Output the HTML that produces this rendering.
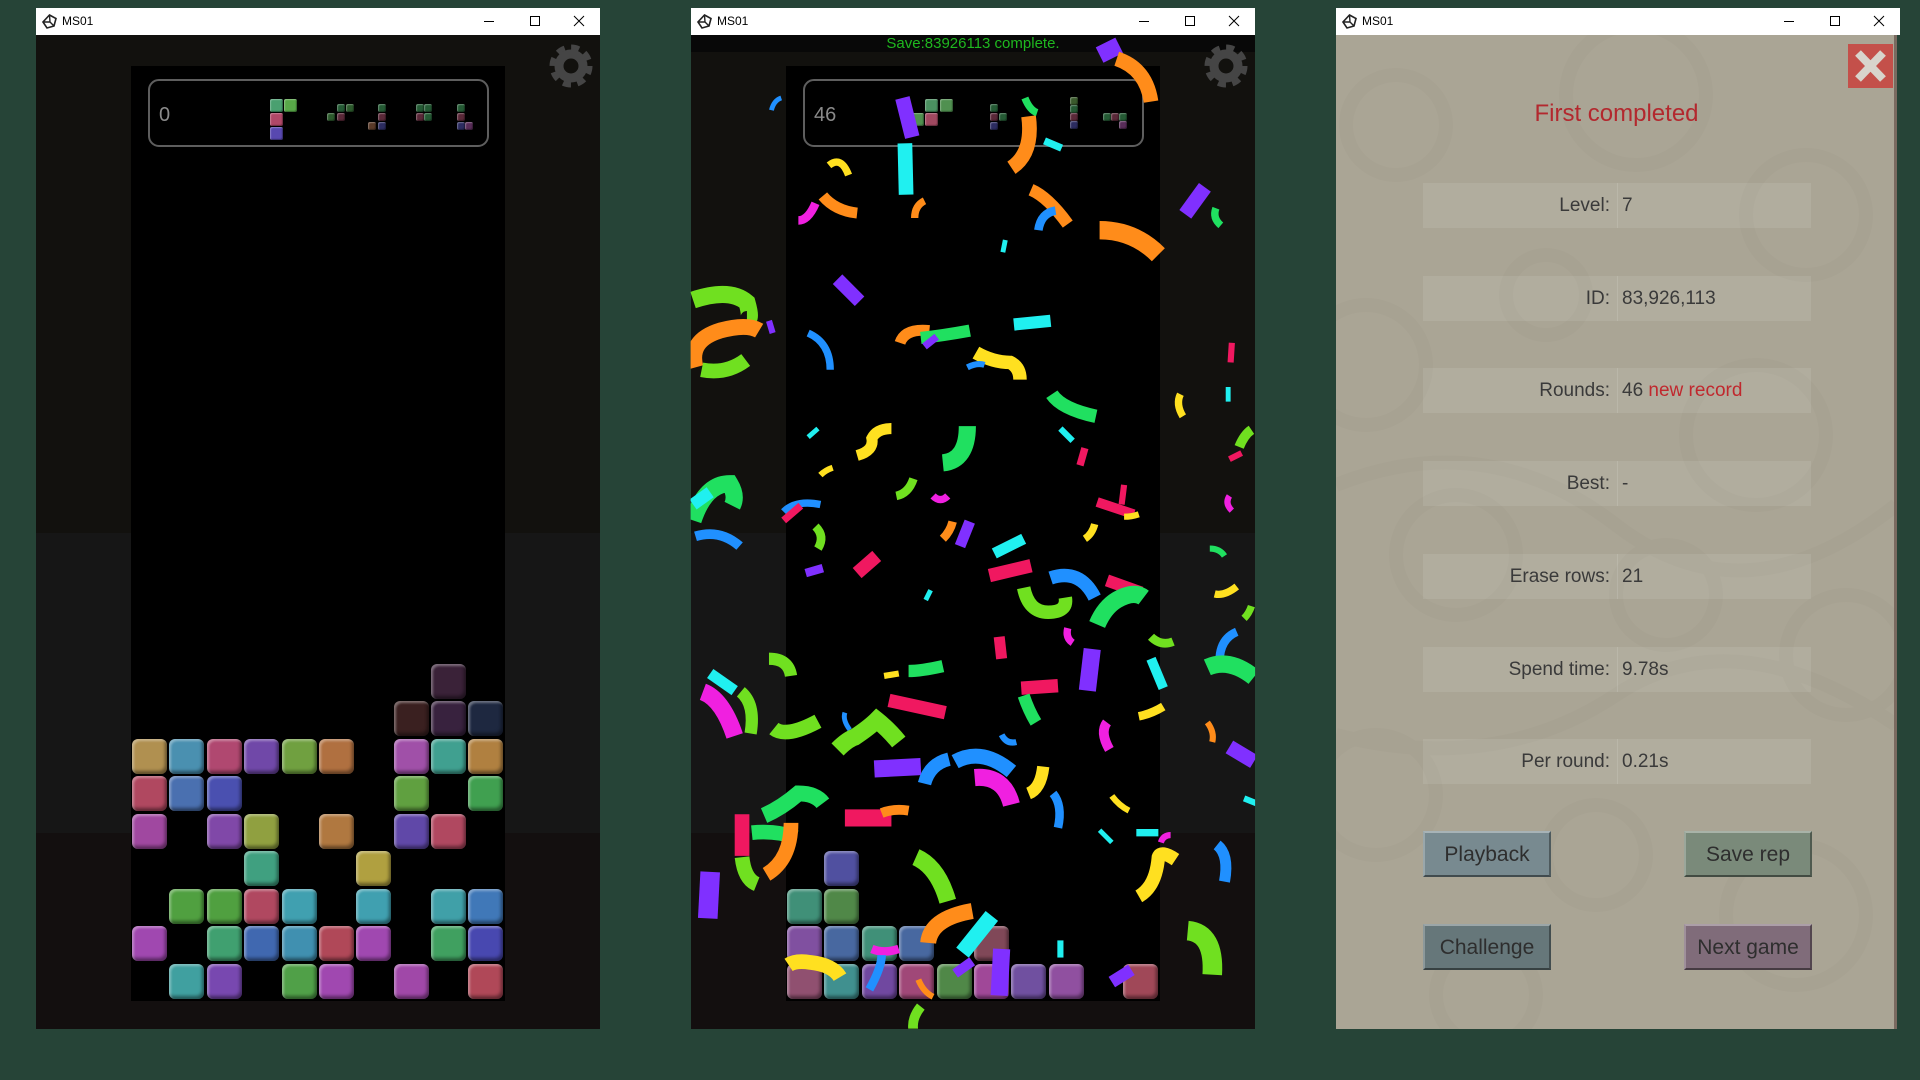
<!DOCTYPE html>
<html><head><meta charset="utf-8"><style>
*{margin:0;padding:0;box-sizing:border-box}
body{width:1920px;height:1080px;background:#264437;position:relative;overflow:hidden;font-family:"Liberation Sans",sans-serif}
.win{position:absolute;top:8px;width:564px;height:1021px;overflow:hidden}
.tb{position:absolute;left:0;top:0;width:564px;height:27px;background:#fff;font-size:12px;color:#000}
.tb .t{position:absolute;left:26px;top:6px}
.tb svg{position:absolute}
.c{position:absolute;left:0;top:27px;width:564px;height:994px}
.bd{position:absolute;background:#000}
.b{position:absolute;width:35px;height:35px;border-radius:6px;box-shadow:inset 2px 2px 2px rgba(255,255,255,.35),inset -2px -3px 3px rgba(0,0,0,.45)}
.p{position:absolute;border-radius:2px;box-shadow:inset 1px 1px 1px rgba(255,255,255,.3),inset -1px -1px 1px rgba(0,0,0,.4)}
.sb{position:absolute;border:2px solid #5e5e5e;border-radius:11px}
.sc{position:absolute;color:#8a8a8a;font-size:20px}
.row{position:absolute;left:87px;width:388px;height:45px;background:rgba(255,255,255,.09)}
.row .l{position:absolute;right:201px;top:12px;font-size:19px;color:#3a3a3a;white-space:nowrap}
.row .v{position:absolute;left:199px;top:12px;font-size:19px;color:#3a3a3a;white-space:nowrap}
.row .dv{position:absolute;left:194px;top:0;width:1px;height:45px;background:rgba(255,255,255,.12)}
.btn{position:absolute;width:128px;height:46px;font-size:21px;color:#2e2e2e;text-align:center;line-height:44px;border:2px solid;border-color:rgba(255,255,255,.35) rgba(0,0,0,.35) rgba(0,0,0,.45) rgba(255,255,255,.25)}
</style></head><body>

<!-- WINDOW 1 -->
<div class="win" style="left:36px">
 <div class="tb">
  <svg style="left:6px;top:6px" width="15" height="15" viewBox="0 0 15 15"><path d="M7.5 1 L14 4.5 L12 12 L5 14 L1 8 Z" fill="none" stroke="#222" stroke-width="1.6"/><path d="M7.5 1 L8 8 L1 8 M8 8 L12 12" stroke="#222" stroke-width="1.4" fill="none"/></svg>
  <span class="t">MS01</span>
  <svg style="left:447px;top:7px" width="12" height="12"><path d="M1 6.5H11" stroke="#000"/></svg>
  <svg style="left:493px;top:7px" width="12" height="12"><rect x="1.5" y="1.5" width="9" height="9" fill="none" stroke="#000"/></svg>
  <svg style="left:537px;top:7px" width="12" height="12"><path d="M1 1L11 11M11 1L1 11" stroke="#000"/></svg>
 </div>
 <div class="c" style="background:linear-gradient(#12110e 0,#12110e 498px,#161616 498px,#161616 798px,#130f0f 798px)">
  <div class="bd" style="left:95px;top:31px;width:374px;height:935px"></div>
  <svg style="position:absolute;left:512px;top:8px" width="46" height="46" viewBox="-23 -23 46 46"><circle r="17" fill="none" stroke="#454545" stroke-width="9" stroke-dasharray="7.4 5.95"/><circle r="12" fill="none" stroke="#454545" stroke-width="9"/></svg>
  <div class="sb" style="left:112px;top:44px;width:341px;height:68px"></div>
  <div class="sc" style="left:123px;top:69px">0</div>
 </div>
</div>
<div class="p" style="left:270px;top:99px;width:13px;height:13px;background:#4aa070"></div>
<div class="p" style="left:284px;top:99px;width:13px;height:13px;background:#58a848"></div>
<div class="p" style="left:270px;top:113px;width:13px;height:13px;background:#b04868"></div>
<div class="p" style="left:270px;top:127px;width:13px;height:13px;background:#5848b0"></div>
<div class="p" style="left:337px;top:104px;width:8px;height:8px;background:#245a34"></div>
<div class="p" style="left:346px;top:104px;width:8px;height:8px;background:#2c5a2c"></div>
<div class="p" style="left:327px;top:113px;width:8px;height:8px;background:#2c5a2c"></div>
<div class="p" style="left:337px;top:113px;width:8px;height:8px;background:#5a2838"></div>
<div class="p" style="left:378px;top:104px;width:8px;height:8px;background:#245a34"></div>
<div class="p" style="left:378px;top:113px;width:8px;height:8px;background:#5a2838"></div>
<div class="p" style="left:368px;top:122px;width:8px;height:8px;background:#5a3a28"></div>
<div class="p" style="left:378px;top:122px;width:8px;height:8px;background:#2c2c60"></div>
<div class="p" style="left:416px;top:104px;width:8px;height:8px;background:#245a34"></div>
<div class="p" style="left:424px;top:104px;width:8px;height:8px;background:#245a34"></div>
<div class="p" style="left:416px;top:113px;width:8px;height:8px;background:#5a2838"></div>
<div class="p" style="left:424px;top:113px;width:8px;height:8px;background:#245a34"></div>
<div class="p" style="left:457px;top:104px;width:8px;height:8px;background:#245a34"></div>
<div class="p" style="left:457px;top:113px;width:8px;height:8px;background:#5a2838"></div>
<div class="p" style="left:457px;top:122px;width:8px;height:8px;background:#2c2c60"></div>
<div class="p" style="left:465px;top:122px;width:8px;height:8px;background:#582c58"></div>

<div class="b" style="left:431px;top:664px;background:#3a2238"></div>
<div class="b" style="left:394px;top:701px;background:#3a2020"></div>
<div class="b" style="left:431px;top:701px;background:#38223e"></div>
<div class="b" style="left:468px;top:701px;background:#1e2840"></div>
<div class="b" style="left:132px;top:739px;background:#b09050"></div>
<div class="b" style="left:169px;top:739px;background:#4a90b0"></div>
<div class="b" style="left:207px;top:739px;background:#b04870"></div>
<div class="b" style="left:244px;top:739px;background:#7048a8"></div>
<div class="b" style="left:282px;top:739px;background:#70a040"></div>
<div class="b" style="left:319px;top:739px;background:#b07040"></div>
<div class="b" style="left:394px;top:739px;background:#a050a8"></div>
<div class="b" style="left:431px;top:739px;background:#40a090"></div>
<div class="b" style="left:468px;top:739px;background:#b08040"></div>
<div class="b" style="left:132px;top:776px;background:#b04860"></div>
<div class="b" style="left:169px;top:776px;background:#4a70b0"></div>
<div class="b" style="left:207px;top:776px;background:#4a50b0"></div>
<div class="b" style="left:394px;top:776px;background:#60a040"></div>
<div class="b" style="left:468px;top:776px;background:#40a050"></div>
<div class="b" style="left:132px;top:814px;background:#a048a0"></div>
<div class="b" style="left:207px;top:814px;background:#8048a8"></div>
<div class="b" style="left:244px;top:814px;background:#90a040"></div>
<div class="b" style="left:319px;top:814px;background:#b07840"></div>
<div class="b" style="left:394px;top:814px;background:#6048a8"></div>
<div class="b" style="left:431px;top:814px;background:#b04860"></div>
<div class="b" style="left:244px;top:851px;background:#40a080"></div>
<div class="b" style="left:356px;top:851px;background:#b0a040"></div>
<div class="b" style="left:169px;top:889px;background:#50a040"></div>
<div class="b" style="left:207px;top:889px;background:#50a040"></div>
<div class="b" style="left:244px;top:889px;background:#b04860"></div>
<div class="b" style="left:282px;top:889px;background:#40a0b0"></div>
<div class="b" style="left:356px;top:889px;background:#40a0b0"></div>
<div class="b" style="left:431px;top:889px;background:#40a0a8"></div>
<div class="b" style="left:468px;top:889px;background:#4078b8"></div>
<div class="b" style="left:132px;top:926px;background:#a048b0"></div>
<div class="b" style="left:207px;top:926px;background:#40a070"></div>
<div class="b" style="left:244px;top:926px;background:#4068b0"></div>
<div class="b" style="left:282px;top:926px;background:#4090b0"></div>
<div class="b" style="left:319px;top:926px;background:#b04858"></div>
<div class="b" style="left:356px;top:926px;background:#a048b0"></div>
<div class="b" style="left:431px;top:926px;background:#40a060"></div>
<div class="b" style="left:468px;top:926px;background:#4848b0"></div>
<div class="b" style="left:169px;top:964px;background:#40a0a0"></div>
<div class="b" style="left:207px;top:964px;background:#7848b0"></div>
<div class="b" style="left:282px;top:964px;background:#50a048"></div>
<div class="b" style="left:319px;top:964px;background:#a048b0"></div>
<div class="b" style="left:394px;top:964px;background:#a048a8"></div>
<div class="b" style="left:468px;top:964px;background:#b04858"></div>

<!-- WINDOW 2 -->
<div class="win" style="left:691px">
 <div class="tb">
  <svg style="left:6px;top:6px" width="15" height="15" viewBox="0 0 15 15"><path d="M7.5 1 L14 4.5 L12 12 L5 14 L1 8 Z" fill="none" stroke="#222" stroke-width="1.6"/><path d="M7.5 1 L8 8 L1 8 M8 8 L12 12" stroke="#222" stroke-width="1.4" fill="none"/></svg>
  <span class="t">MS01</span>
  <svg style="left:447px;top:7px" width="12" height="12"><path d="M1 6.5H11" stroke="#000"/></svg>
  <svg style="left:493px;top:7px" width="12" height="12"><rect x="1.5" y="1.5" width="9" height="9" fill="none" stroke="#000"/></svg>
  <svg style="left:537px;top:7px" width="12" height="12"><path d="M1 1L11 11M11 1L1 11" stroke="#000"/></svg>
 </div>
 <div class="c" style="background:linear-gradient(#080808 0,#080808 17px,#12110e 17px,#12110e 498px,#161616 498px,#161616 798px,#130f0f 798px)">
  <div class="bd" style="left:95px;top:31px;width:374px;height:935px"></div>
  <svg style="position:absolute;left:512px;top:8px" width="46" height="46" viewBox="-23 -23 46 46"><circle r="17" fill="none" stroke="#454545" stroke-width="9" stroke-dasharray="7.4 5.95"/><circle r="12" fill="none" stroke="#454545" stroke-width="9"/></svg>
  <div class="sb" style="left:112px;top:44px;width:341px;height:68px"></div>
  <div class="sc" style="left:123px;top:69px">46</div>
  <div style="position:absolute;left:0;width:564px;top:0;text-align:center;color:#1fb81f;font-size:15px">Save:83926113 complete.</div>
 </div>
</div>
<div class="p" style="left:925px;top:99px;width:13px;height:13px;background:#4a9060"></div>
<div class="p" style="left:940px;top:99px;width:13px;height:13px;background:#509050"></div>
<div class="p" style="left:911px;top:113px;width:13px;height:13px;background:#509050"></div>
<div class="p" style="left:925px;top:113px;width:13px;height:13px;background:#a04860"></div>
<div class="p" style="left:990px;top:104px;width:8px;height:8px;background:#245a34"></div>
<div class="p" style="left:990px;top:113px;width:8px;height:8px;background:#5a2838"></div>
<div class="p" style="left:999px;top:113px;width:8px;height:8px;background:#245a34"></div>
<div class="p" style="left:990px;top:122px;width:8px;height:8px;background:#2c2c60"></div>
<div class="p" style="left:1070px;top:97px;width:8px;height:8px;background:#3a5a2c"></div>
<div class="p" style="left:1070px;top:105px;width:8px;height:8px;background:#245a34"></div>
<div class="p" style="left:1070px;top:113px;width:8px;height:8px;background:#5a2838"></div>
<div class="p" style="left:1070px;top:121px;width:8px;height:8px;background:#2c2c60"></div>
<div class="p" style="left:1103px;top:113px;width:8px;height:8px;background:#245a34"></div>
<div class="p" style="left:1111px;top:113px;width:8px;height:8px;background:#5a2838"></div>
<div class="p" style="left:1119px;top:113px;width:8px;height:8px;background:#245a34"></div>
<div class="p" style="left:1119px;top:121px;width:8px;height:8px;background:#582c58"></div>

<div class="b" style="left:824px;top:851px;background:#5050a0"></div>
<div class="b" style="left:787px;top:889px;background:#409078"></div>
<div class="b" style="left:824px;top:889px;background:#508848"></div>
<div class="b" style="left:787px;top:926px;background:#8050a0"></div>
<div class="b" style="left:824px;top:926px;background:#4868a0"></div>
<div class="b" style="left:862px;top:926px;background:#409078"></div>
<div class="b" style="left:899px;top:926px;background:#4868a0"></div>
<div class="b" style="left:974px;top:926px;background:#804858"></div>
<div class="b" style="left:787px;top:964px;background:#905070"></div>
<div class="b" style="left:824px;top:964px;background:#40908f"></div>
<div class="b" style="left:862px;top:964px;background:#7048a0"></div>
<div class="b" style="left:899px;top:964px;background:#a04878"></div>
<div class="b" style="left:937px;top:964px;background:#508848"></div>
<div class="b" style="left:974px;top:964px;background:#a04898"></div>
<div class="b" style="left:1011px;top:964px;background:#7050a0"></div>
<div class="b" style="left:1049px;top:964px;background:#9050a0"></div>
<div class="b" style="left:1123px;top:964px;background:#a04858"></div>

<svg style="position:absolute;left:0;top:0" width="1920" height="1080" viewBox="0 0 1568 882">
<defs><clipPath id="cw"><rect x="564" y="29" width="461" height="811"/></clipPath></defs>
<g clip-path="url(#cw)" fill="none" stroke-linecap="butt">
<path d="M630 90q2-8 8-10" stroke="#2090ff" stroke-width="4"/>
<path d="M737 80l8 32" stroke="#8030ff" stroke-width="12"/>
<path d="M739 117l1 42" stroke="#20f0f0" stroke-width="12"/>
<path d="M677 135q10-8 16 8" stroke="#ffe020" stroke-width="6"/>
<path d="M672 160q10 12 28 14" stroke="#ff8c1a" stroke-width="9"/>
<path d="M652 180q8 0 14-14" stroke="#f020e0" stroke-width="7"/>
<path d="M747 178q0-10 8-14" stroke="#ff8c1a" stroke-width="6"/>
<path d="M840 95q4 30-14 42" stroke="#ff8c1a" stroke-width="12"/>
<path d="M837 80q4 10 10 12" stroke="#20e060" stroke-width="6"/>
<path d="M853 115l14 6" stroke="#20f0f0" stroke-width="6"/>
<path d="M842 155q14 6 30 28" stroke="#ff8c1a" stroke-width="10"/>
<path d="M848 188q2-14 14-16" stroke="#2090ff" stroke-width="7"/>
<path d="M898 45l16-8" stroke="#8030ff" stroke-width="14"/>
<path d="M912 48q24 8 28 35" stroke="#ff8c1a" stroke-width="12"/>
<path d="M898 188q28 0 48 20" stroke="#ff8c1a" stroke-width="15"/>
<path d="M968 175l16-22" stroke="#8030ff" stroke-width="12"/>
<path d="M993 170q-3 8 4 14" stroke="#20e060" stroke-width="6"/>
<path d="M821 196l-2 10" stroke="#20f0f0" stroke-width="4"/>
<path d="M684 228l18 18" stroke="#8030ff" stroke-width="11"/>
<path d="M566 245q30-10 44 2q4 14 0 14" stroke="#70e020" stroke-width="14"/>
<path d="M568 300q-6-22 20-30q22-6 32 0" stroke="#ff8c1a" stroke-width="13"/>
<path d="M573 302q20 4 36-8" stroke="#70e020" stroke-width="12"/>
<path d="M628 262l3 10" stroke="#8030ff" stroke-width="5"/>
<path d="M660 272q18 8 18 30" stroke="#2090ff" stroke-width="6"/>
<path d="M735 280q4-12 24-10" stroke="#ff8c1a" stroke-width="9"/>
<path d="M752 276q18-2 40-6" stroke="#20e060" stroke-width="10"/>
<path d="M755 283l10-8" stroke="#8030ff" stroke-width="6"/>
<path d="M828 265l30-3" stroke="#20f0f0" stroke-width="10"/>
<path d="M797 288q14 8 28 8q8 4 8 14" stroke="#ffe020" stroke-width="11"/>
<path d="M790 300q8-4 14-2" stroke="#2090ff" stroke-width="5"/>
<path d="M859 322q8 12 36 18" stroke="#20e060" stroke-width="11"/>
<path d="M964 322q-4 8 2 18" stroke="#ffe020" stroke-width="6"/>
<path d="M1003 316l0 12" stroke="#20f0f0" stroke-width="4"/>
<path d="M1006 280l-1 16" stroke="#f01860" stroke-width="5"/>
<path d="M660 357l8-7" stroke="#20f0f0" stroke-width="4"/>
<path d="M700 372q14-4 12-14q4-8 16-8" stroke="#ffe020" stroke-width="9"/>
<path d="M770 378q20-2 20-30" stroke="#20e060" stroke-width="14"/>
<path d="M670 388q4-4 10-6" stroke="#ffe020" stroke-width="5"/>
<path d="M732 405q10-2 14-14" stroke="#70e020" stroke-width="7"/>
<path d="M762 405q6 6 12 0" stroke="#f020e0" stroke-width="6"/>
<path d="M866 350l10 10" stroke="#20f0f0" stroke-width="5"/>
<path d="M886 366l-4 14" stroke="#f01860" stroke-width="6"/>
<path d="M566 425q10-30 30-30q6 10 2 18" stroke="#20e060" stroke-width="14"/>
<path d="M566 412l14-10" stroke="#20f0f0" stroke-width="10"/>
<path d="M568 438q20-6 36 8" stroke="#2090ff" stroke-width="8"/>
<path d="M640 418q10-10 30-6" stroke="#2090ff" stroke-width="6"/>
<path d="M640 425l14-12" stroke="#f01860" stroke-width="6"/>
<path d="M666 430q8 8 2 18" stroke="#70e020" stroke-width="7"/>
<path d="M896 410l30 10" stroke="#f01860" stroke-width="8"/>
<path d="M918 396l-2 16" stroke="#f01860" stroke-width="5"/>
<path d="M918 422q6 0 12-2" stroke="#ffe020" stroke-width="5"/>
<path d="M886 440q6-4 8-12" stroke="#ffe020" stroke-width="6"/>
<path d="M1012 365q4-10 10-14" stroke="#70e020" stroke-width="8"/>
<path d="M1004 375l10-5" stroke="#f01860" stroke-width="5"/>
<path d="M1004 405q-4 6 2 12" stroke="#f020e0" stroke-width="5"/>
<path d="M770 440q6-6 8-14" stroke="#ff8c1a" stroke-width="7"/>
<path d="M784 446l8-20" stroke="#8030ff" stroke-width="9"/>
<path d="M812 452l24-12" stroke="#20f0f0" stroke-width="9"/>
<path d="M700 468l16-14" stroke="#f01860" stroke-width="11"/>
<path d="M658 468l14-4" stroke="#8030ff" stroke-width="7"/>
<path d="M808 470l34-8" stroke="#f01860" stroke-width="11"/>
<path d="M836 480q4 20 20 20q16 0 14-12" stroke="#70e020" stroke-width="11"/>
<path d="M858 472q24-8 36 16" stroke="#2090ff" stroke-width="11"/>
<path d="M904 474l28 10" stroke="#f01860" stroke-width="10"/>
<path d="M896 510q6-14 16-20q14-8 22-2" stroke="#20e060" stroke-width="14"/>
<path d="M940 520q8 8 18 4" stroke="#70e020" stroke-width="7"/>
<path d="M988 448q8 0 12 6" stroke="#20e060" stroke-width="5"/>
<path d="M992 485q8 2 18-6" stroke="#ffe020" stroke-width="6"/>
<path d="M996 540q0-18 14-24" stroke="#2090ff" stroke-width="7"/>
<path d="M756 490l4-8" stroke="#20f0f0" stroke-width="4"/>
<path d="M816 520l2 18" stroke="#f01860" stroke-width="9"/>
<path d="M876 525q-6-4-4-12" stroke="#f020e0" stroke-width="6"/>
<path d="M1016 505q4-4 6-10" stroke="#70e020" stroke-width="6"/>
<path d="M628 538q16 0 18 14" stroke="#70e020" stroke-width="10"/>
<path d="M580 550l20 14" stroke="#20f0f0" stroke-width="9"/>
<path d="M574 565q16 6 26 36" stroke="#f020e0" stroke-width="14"/>
<path d="M605 565q12 10 8 34" stroke="#70e020" stroke-width="10"/>
<path d="M632 595q10 8 36-6" stroke="#70e020" stroke-width="12"/>
<path d="M690 582q-2 6 4 14" stroke="#2090ff" stroke-width="4"/>
<path d="M742 548q10 0 28-4" stroke="#20e060" stroke-width="10"/>
<path d="M722 552l12-2" stroke="#ffe020" stroke-width="5"/>
<path d="M726 572l46 10" stroke="#f01860" stroke-width="11"/>
<path d="M834 562l30-2" stroke="#f01860" stroke-width="11"/>
<path d="M836 568q4 12 10 22" stroke="#20e060" stroke-width="10"/>
<path d="M892 530l-4 34" stroke="#8030ff" stroke-width="14"/>
<path d="M940 538l10 24" stroke="#20f0f0" stroke-width="8"/>
<path d="M986 545q18-8 38 8" stroke="#20e060" stroke-width="14"/>
<path d="M930 585q10-2 20-8" stroke="#ffe020" stroke-width="7"/>
<path d="M818 600q4 8 12 6" stroke="#2090ff" stroke-width="5"/>
<path d="M684 612q8-8 14-10q12-8 18-14q10 8 18 18" stroke="#70e020" stroke-width="14"/>
<path d="M714 628l38-2" stroke="#8030ff" stroke-width="14"/>
<path d="M755 640q4-16 20-20" stroke="#2090ff" stroke-width="11"/>
<path d="M780 622q22-12 46 8" stroke="#2090ff" stroke-width="12"/>
<path d="M796 635q24-2 30 22" stroke="#f020e0" stroke-width="14"/>
<path d="M840 648q10-4 12-22" stroke="#ffe020" stroke-width="10"/>
<path d="M904 590q-6 8 2 22" stroke="#f020e0" stroke-width="8"/>
<path d="M986 590q6 8 4 16" stroke="#ff8c1a" stroke-width="5"/>
<path d="M1004 610l20 12" stroke="#8030ff" stroke-width="12"/>
<path d="M1016 652l10 4" stroke="#20f0f0" stroke-width="5"/>
<path d="M606 665l0 34" stroke="#f01860" stroke-width="12"/>
<path d="M614 680q20-2 36 4" stroke="#20e060" stroke-width="12"/>
<path d="M606 700q2 18 12 22" stroke="#70e020" stroke-width="12"/>
<path d="M646 672q0 30-20 42" stroke="#ff8c1a" stroke-width="12"/>
<path d="M624 666q14-6 28-18q14 0 20 8" stroke="#20e060" stroke-width="13"/>
<path d="M690 668l38 0" stroke="#f01860" stroke-width="14"/>
<path d="M720 664q10-4 22-2" stroke="#ff8c1a" stroke-width="8"/>
<path d="M580 712l-2 38" stroke="#8030ff" stroke-width="16"/>
<path d="M860 648q8 10 4 28" stroke="#2090ff" stroke-width="7"/>
<path d="M908 650q6 8 14 12" stroke="#ffe020" stroke-width="5"/>
<path d="M898 678l10 10" stroke="#20f0f0" stroke-width="4"/>
<path d="M928 680l18 0" stroke="#20f0f0" stroke-width="6"/>
<path d="M948 688q2-6 8-6" stroke="#f020e0" stroke-width="5"/>
<path d="M930 732q14-8 16-32q2-6 14 2" stroke="#ffe020" stroke-width="11"/>
<path d="M994 690q10 8 6 30" stroke="#2090ff" stroke-width="9"/>
<path d="M748 700q18 8 26 36" stroke="#70e020" stroke-width="14"/>
<path d="M758 770q2-20 36-26" stroke="#ff8c1a" stroke-width="13"/>
<path d="M786 778l24-30" stroke="#20f0f0" stroke-width="13"/>
<path d="M780 795l14-10" stroke="#8030ff" stroke-width="8"/>
<path d="M644 788q6-4 18-2q18 2 24 12" stroke="#ffe020" stroke-width="12"/>
<path d="M712 775q10 4 22 0" stroke="#f020e0" stroke-width="7"/>
<path d="M720 780q0 10-10 28" stroke="#2090ff" stroke-width="7"/>
<path d="M818 775l-2 38" stroke="#8030ff" stroke-width="14"/>
<path d="M866 768l0 14" stroke="#20f0f0" stroke-width="5"/>
<path d="M908 802l16-10" stroke="#8030ff" stroke-width="10"/>
<path d="M970 760q22 2 20 36" stroke="#70e020" stroke-width="16"/>
<path d="M752 822q-8 10-6 20" stroke="#70e020" stroke-width="8"/>
<path d="M750 800q4 10 12 14" stroke="#ff8c1a" stroke-width="5"/>
</g></svg>

<!-- WINDOW 3 -->
<div class="win" style="left:1336px">
 <div class="tb">
  <svg style="left:6px;top:6px" width="15" height="15" viewBox="0 0 15 15"><path d="M7.5 1 L14 4.5 L12 12 L5 14 L1 8 Z" fill="none" stroke="#222" stroke-width="1.6"/><path d="M7.5 1 L8 8 L1 8 M8 8 L12 12" stroke="#222" stroke-width="1.4" fill="none"/></svg>
  <span class="t">MS01</span>
  <svg style="left:447px;top:7px" width="12" height="12"><path d="M1 6.5H11" stroke="#000"/></svg>
  <svg style="left:493px;top:7px" width="12" height="12"><rect x="1.5" y="1.5" width="9" height="9" fill="none" stroke="#000"/></svg>
  <svg style="left:537px;top:7px" width="12" height="12"><path d="M1 1L11 11M11 1L1 11" stroke="#000"/></svg>
 </div>
 <div class="c" style="background:#aaa595;width:561px">
  <svg style="position:absolute;left:0;top:0" width="561" height="994" fill="none" stroke="#a6a191" stroke-width="14" opacity=".6">
   <circle cx="60" cy="90" r="50"/><circle cx="300" cy="60" r="70"/><circle cx="470" cy="180" r="60"/>
   <circle cx="30" cy="330" r="60"/><circle cx="210" cy="260" r="40"/><circle cx="420" cy="400" r="70"/>
   <circle cx="120" cy="520" r="60"/><circle cx="330" cy="560" r="50"/><circle cx="510" cy="620" r="60"/>
   <circle cx="40" cy="760" r="60"/><circle cx="260" cy="820" r="50"/><circle cx="460" cy="880" r="70"/>
   <circle cx="150" cy="960" r="50"/>
   <path d="M0 450q150-60 280 40t280-20M0 700q160 40 280-40t280 30"/>
  </svg>
  <div style="position:absolute;right:0;top:0;width:3px;height:994px;background:#7a6a60"></div>
  <div style="position:absolute;left:512px;top:9px;width:45px;height:44px;background:#c4504a">
   <svg width="45" height="44"><path d="M10 9L35 35M35 9L10 35" stroke="#d8d4cc" stroke-width="8"/></svg></div>
  <div style="position:absolute;left:0;width:561px;top:65px;text-align:center;font-size:24px;color:#b3282e">First completed</div>
  <div class="row" style="top:148px"><div class="dv"></div><span class="l">Level:</span><span class="v">7</span></div>
  <div class="row" style="top:241px"><div class="dv"></div><span class="l">ID:</span><span class="v">83,926,113</span></div>
  <div class="row" style="top:333px"><div class="dv"></div><span class="l">Rounds:</span><span class="v">46 <span style="color:#c0282e">new record</span></span></div>
  <div class="row" style="top:426px"><div class="dv"></div><span class="l">Best:</span><span class="v">-</span></div>
  <div class="row" style="top:519px"><div class="dv"></div><span class="l">Erase rows:</span><span class="v">21</span></div>
  <div class="row" style="top:612px"><div class="dv"></div><span class="l">Spend time:</span><span class="v">9.78s</span></div>
  <div class="row" style="top:704px"><div class="dv"></div><span class="l">Per round:</span><span class="v">0.21s</span></div>
  <div class="btn" style="left:87px;top:796px;background:#788a90">Playback</div>
  <div class="btn" style="left:348px;top:796px;background:#7a8a7a">Save rep</div>
  <div class="btn" style="left:87px;top:889px;background:#66777a">Challenge</div>
  <div class="btn" style="left:348px;top:889px;background:#806c7a">Next game</div>
 </div>
</div>
</body></html>
